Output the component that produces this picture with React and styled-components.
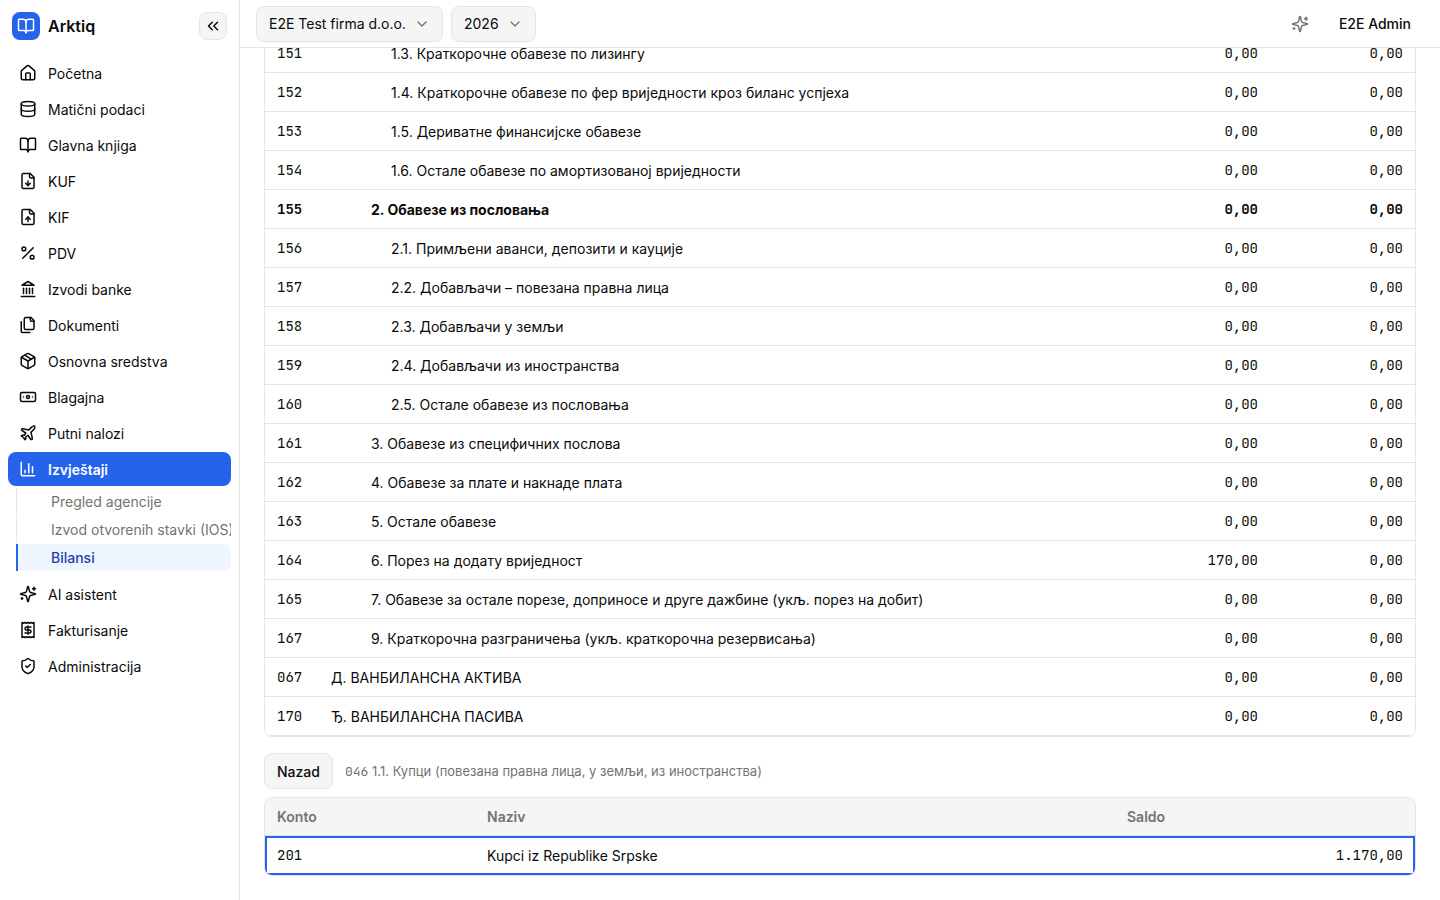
import React from 'react';
import styled, { createGlobalStyle, css } from 'styled-components';
import {
  Banknote,
  BookOpen,
  ChartColumn,
  ChevronDown,
  ChevronsLeft,
  Database,
  House,
  Package,
  Percent,
  Plane,
  Receipt,
  ShieldCheck,
} from 'lucide-react';

const GlobalStyle = createGlobalStyle`
  *,
  *::before,
  *::after {
    box-sizing: border-box;
  }

  body {
    margin: 0;
    background-color: #fff;
    color: #0a0a0a;
    font-family: Inter, 'Liberation Sans', sans-serif;
    font-size: 14px;
    line-height: 20px;
  }

  button,
  select {
    font: inherit;
    color: inherit;
  }
`;

const control = css`
  border: 1px solid #e5e5e5;
  border-radius: 8px;
  background-color: #f5f5f5;
`;

const mono = css`
  font-family: 'JetBrains Mono', 'DejaVu Sans Mono', monospace;
`;

const Layout = styled.div`
  display: grid;
  grid-template-columns: 240px minmax(0, 1fr);
  height: 100vh;
  overflow: hidden;
`;

const Sidebar = styled.aside`
  border-right: 1px solid #e5e5e5;
  overflow: hidden;
`;

const Brand = styled.div`
  display: flex;
  align-items: center;
  gap: 8px;
  padding: 12px 12px 16px;
`;

const Logo = styled.span`
  display: grid;
  place-items: center;
  width: 28px;
  height: 28px;
  border-radius: 8px;
  background-color: #2563eb;
  color: #fff;
`;

const BrandName = styled.span`
  flex: 1;
  font-size: 16px;
  font-weight: 600;
`;

const CollapseButton = styled.button`
  ${control}
  display: grid;
  place-items: center;
  width: 28px;
  height: 28px;
  padding: 0;
`;

const Nav = styled.nav`
  display: flex;
  flex-direction: column;
  gap: 2px;
  padding: 0 8px;
`;

const NavLink = styled.a`
  display: flex;
  align-items: center;
  gap: 11px;
  height: 34px;
  padding: 0 11px;
  border-radius: 8px;
  color: ${(props) => (props.$active ? '#fff' : 'inherit')};
  background-color: ${(props) => (props.$active ? '#2563eb' : 'transparent')};
  font-weight: ${(props) => (props.$active ? 600 : 400)};
  line-height: 21px;
  text-decoration: none;
`;

const SubNav = styled.div`
  display: flex;
  flex-direction: column;
  gap: 1px;
  margin: 0 0 4px 8px;
`;

const SubLink = styled.a`
  height: 27px;
  padding-left: ${(props) => (props.$active ? 33 : 34)}px;
  border-left: ${(props) =>
    props.$active ? '2px solid #2563eb' : '1px solid #e5e5e5'};
  border-radius: ${(props) => (props.$active ? '0 8px 8px 0' : 0)};
  background-color: ${(props) => (props.$active ? '#eff6ff' : 'transparent')};
  color: ${(props) => (props.$active ? '#1e40af' : '#737373')};
  font-weight: ${(props) => (props.$active ? 500 : 400)};
  line-height: 27px;
  text-decoration: none;
  white-space: nowrap;
  overflow: hidden;
`;

const Content = styled.div`
  display: flex;
  flex-direction: column;
  min-height: 0;
`;

const Topbar = styled.header`
  flex: none;
  display: flex;
  align-items: center;
  gap: 8px;
  height: 48px;
  padding: 0 16px;
  border-bottom: 1px solid #e5e5e5;
`;

const SelectBox = styled.label`
  display: grid;
  align-items: center;

  > * {
    grid-area: 1 / 1;
  }

  svg {
    justify-self: end;
    margin-right: 13px;
    color: #737373;
    pointer-events: none;
  }
`;

const Select = styled.select`
  ${control}
  appearance: none;
  height: 36px;
  padding: 0 36px 0 12px;
`;

const TopActions = styled.div`
  display: flex;
  gap: 8px;
  margin-left: auto;
`;

const GhostButton = styled.button`
  display: flex;
  align-items: center;
  height: 36px;
  padding: 0 ${(props) => (props.$icon ? 9 : 13)}px;
  border: 0;
  background: none;
  color: ${(props) => (props.$icon ? '#737373' : 'inherit')};
  font-weight: 500;
`;

// Scrolled to its end: the last block rests on the bottom padding
const Main = styled.main`
  flex: 1;
  display: flex;
  flex-direction: column;
  justify-content: flex-end;
  min-height: 0;
  padding: 0 24px 24px;
  overflow: hidden;
`;

const TableCard = styled.div`
  flex: none;
  border: 1px solid #e5e5e5;
  border-radius: 8px;
  overflow: hidden;
`;

const Table = styled.table`
  width: 100%;
  table-layout: fixed;
  border-spacing: 0;
`;

const Col = styled.col`
  width: ${(props) => props.$width}px;
`;

const HeadCell = styled.th`
  height: 38px;
  padding: 0 12px;
  border-bottom: 1px solid #e5e5e5;
  background-color: #f5f5f5;
  color: #737373;
  font-weight: 600;
  text-align: left;
`;

const Row = styled.tr`
  font-weight: ${(props) => (props.$bold ? 700 : 400)};
  ${(props) =>
    props.$focused &&
    css`
      outline: 2px solid #2563eb;
      outline-offset: -2px;
    `}
`;

const Cell = styled.td`
  height: 39px;
  padding: 0 12px 0 ${(props) => 12 + (props.$level || 0) * 20}px;
  border-bottom: 1px solid #e5e5e5;
  line-height: 21px;
`;

const CodeCell = styled(Cell)`
  ${mono}
  line-height: 20px;
`;

const AmountCell = styled(CodeCell)`
  text-align: right;
`;

const DetailBar = styled.div`
  flex: none;
  display: flex;
  align-items: center;
  gap: 12px;
  margin: 16px 0 8px;
`;

const BackButton = styled.button`
  ${control}
  height: 36px;
  padding: 0 12px;
  font-weight: 500;
  line-height: 21px;
`;

const DetailTitle = styled.span`
  color: #737373;
  font-size: 13px;

  code {
    ${mono}
    font-size: 13px;
  }
`;

const Icon = ({ size = 18, children }) => (
  <svg
    width={size}
    height={size}
    viewBox="0 0 24 24"
    fill="none"
    stroke="currentColor"
    strokeWidth="2"
    strokeLinecap="round"
    strokeLinejoin="round"
    aria-hidden="true"
  >
    {children}
  </svg>
);

const FileDown = () => (
  <Icon>
    <path d="M15 2H6a2 2 0 0 0-2 2v16a2 2 0 0 0 2 2h12a2 2 0 0 0 2-2V7Z" />
    <path d="M14 2v4a2 2 0 0 0 2 2h4" />
    <path d="M12 18v-6" />
    <path d="m9 15 3 3 3-3" />
  </Icon>
);

const FileUp = () => (
  <Icon>
    <path d="M15 2H6a2 2 0 0 0-2 2v16a2 2 0 0 0 2 2h12a2 2 0 0 0 2-2V7Z" />
    <path d="M14 2v4a2 2 0 0 0 2 2h4" />
    <path d="M12 12v6" />
    <path d="m15 15-3-3-3 3" />
  </Icon>
);

const Files = () => (
  <Icon>
    <path d="M20 7h-3a2 2 0 0 1-2-2V2" />
    <path d="M9 18a2 2 0 0 1-2-2V4a2 2 0 0 1 2-2h7l4 4v10a2 2 0 0 1-2 2Z" />
    <path d="M3 7.6v12.8A1.6 1.6 0 0 0 4.6 22h9.8" />
  </Icon>
);

const Landmark = () => (
  <Icon>
    <path d="M3 22h18" />
    <path d="M6 18v-7" />
    <path d="M10 18v-7" />
    <path d="M14 18v-7" />
    <path d="M18 18v-7" />
    <path d="m12 2 8 5H4Z" />
  </Icon>
);

const Sparkles = () => (
  <Icon>
    <path d="M9.937 15.5A2 2 0 0 0 8.5 14.063l-6.135-1.582a.5.5 0 0 1 0-.962L8.5 9.936A2 2 0 0 0 9.937 8.5l1.582-6.135a.5.5 0 0 1 .963 0L14.063 8.5A2 2 0 0 0 15.5 9.937l6.135 1.581a.5.5 0 0 1 0 .964L15.5 14.063a2 2 0 0 0-1.437 1.437l-1.582 6.135a.5.5 0 0 1-.963 0z" />
    <path d="M20 3v4" />
    <path d="M22 5h-4" />
    <path d="M4 17v2" />
    <path d="M5 18H3" />
  </Icon>
);

const navItems = [
  { label: 'Početna', icon: House },
  { label: 'Matični podaci', icon: Database },
  { label: 'Glavna knjiga', icon: BookOpen },
  { label: 'KUF', icon: FileDown },
  { label: 'KIF', icon: FileUp },
  { label: 'PDV', icon: Percent },
  { label: 'Izvodi banke', icon: Landmark },
  { label: 'Dokumenti', icon: Files },
  { label: 'Osnovna sredstva', icon: Package },
  { label: 'Blagajna', icon: Banknote },
  { label: 'Putni nalozi', icon: Plane },
  {
    label: 'Izvještaji',
    icon: ChartColumn,
    active: true,
    children: ['Pregled agencije', 'Izvod otvorenih stavki (IOS)', 'Bilansi'],
  },
  { label: 'AI asistent', icon: Sparkles },
  { label: 'Fakturisanje', icon: Receipt },
  { label: 'Administracija', icon: ShieldCheck },
];

const rows = [
  { code: '151', level: 3, name: '1.3. Краткорочне обавезе по лизингу' },
  {
    code: '152',
    level: 3,
    name: '1.4. Краткорочне обавезе по фер вриједности кроз биланс успјеха',
  },
  { code: '153', level: 3, name: '1.5. Дериватне финансијске обавезе' },
  {
    code: '154',
    level: 3,
    name: '1.6. Остале обавезе по амортизованој вриједности',
  },
  { code: '155', level: 2, name: '2. Обавезе из пословања', bold: true },
  { code: '156', level: 3, name: '2.1. Примљени аванси, депозити и кауције' },
  { code: '157', level: 3, name: '2.2. Добављачи – повезана правна лица' },
  { code: '158', level: 3, name: '2.3. Добављачи у земљи' },
  { code: '159', level: 3, name: '2.4. Добављачи из иностранства' },
  { code: '160', level: 3, name: '2.5. Остале обавезе из пословања' },
  { code: '161', level: 2, name: '3. Обавезе из специфичних послова' },
  { code: '162', level: 2, name: '4. Обавезе за плате и накнаде плата' },
  { code: '163', level: 2, name: '5. Остале обавезе' },
  {
    code: '164',
    level: 2,
    name: '6. Порез на додату вриједност',
    current: '170,00',
  },
  {
    code: '165',
    level: 2,
    name: '7. Обавезе за остале порезе, доприносе и друге дажбине (укљ. порез на добит)',
  },
  {
    code: '167',
    level: 2,
    name: '9. Краткорочна разграничења (укљ. краткорочна резервисања)',
  },
  { code: '067', level: 0, name: 'Д. ВАНБИЛАНСНА АКТИВА' },
  { code: '170', level: 0, name: 'Ђ. ВАНБИЛАНСНА ПАСИВА' },
];

const SideNav = () => (
  <Sidebar>
    <Brand>
      <Logo>
        <BookOpen size={18} />
      </Logo>
      <BrandName>Arktiq</BrandName>
      <CollapseButton aria-label="Skupi meni">
        <ChevronsLeft size={18} />
      </CollapseButton>
    </Brand>
    <Nav>
      {navItems.map(({ label, icon: ItemIcon, active, children }) => (
        <React.Fragment key={label}>
          <NavLink href="#" $active={active}>
            <ItemIcon size={18} />
            {label}
          </NavLink>
          {children && (
            <SubNav>
              {children.map((child) => (
                <SubLink key={child} href="#" $active={child === 'Bilansi'}>
                  {child}
                </SubLink>
              ))}
            </SubNav>
          )}
        </React.Fragment>
      ))}
    </Nav>
  </Sidebar>
);

const Picker = ({ label, value }) => (
  <SelectBox>
    <Select aria-label={label} defaultValue={value}>
      <option>{value}</option>
    </Select>
    <ChevronDown size={16} />
  </SelectBox>
);

const App = () => {
  return (
    <>
      <GlobalStyle />
      <Layout>
        <SideNav />
        <Content>
          <Topbar>
            <Picker label="Firma" value="E2E Test firma d.o.o." />
            <Picker label="Godina" value="2026" />
            <TopActions>
              <GhostButton $icon aria-label="AI asistent">
                <Sparkles />
              </GhostButton>
              <GhostButton>E2E Admin</GhostButton>
            </TopActions>
          </Topbar>
          <Main>
            <TableCard>
              <Table>
                <colgroup>
                  <Col $width={54} />
                  <col />
                  <Col $width={145} />
                  <Col $width={145} />
                </colgroup>
                <tbody>
                  {rows.map((row) => (
                    <Row key={row.code} $bold={row.bold}>
                      <CodeCell>{row.code}</CodeCell>
                      <Cell $level={row.level}>{row.name}</Cell>
                      <AmountCell>{row.current || '0,00'}</AmountCell>
                      <AmountCell>0,00</AmountCell>
                    </Row>
                  ))}
                </tbody>
              </Table>
            </TableCard>
            <DetailBar>
              <BackButton>Nazad</BackButton>
              <DetailTitle>
                <code>046</code> 1.1. Купци (повезана правна лица, у земљи, из
                иностранства)
              </DetailTitle>
            </DetailBar>
            <TableCard>
              <Table>
                <colgroup>
                  <Col $width={210} />
                  <col />
                  <Col $width={300} />
                </colgroup>
                <thead>
                  <tr>
                    <HeadCell>Konto</HeadCell>
                    <HeadCell>Naziv</HeadCell>
                    <HeadCell>Saldo</HeadCell>
                  </tr>
                </thead>
                <tbody>
                  <Row $focused tabIndex={0}>
                    <CodeCell>201</CodeCell>
                    <Cell>Kupci iz Republike Srpske</Cell>
                    <AmountCell>1.170,00</AmountCell>
                  </Row>
                </tbody>
              </Table>
            </TableCard>
          </Main>
        </Content>
      </Layout>
    </>
  );
};

export default App;
